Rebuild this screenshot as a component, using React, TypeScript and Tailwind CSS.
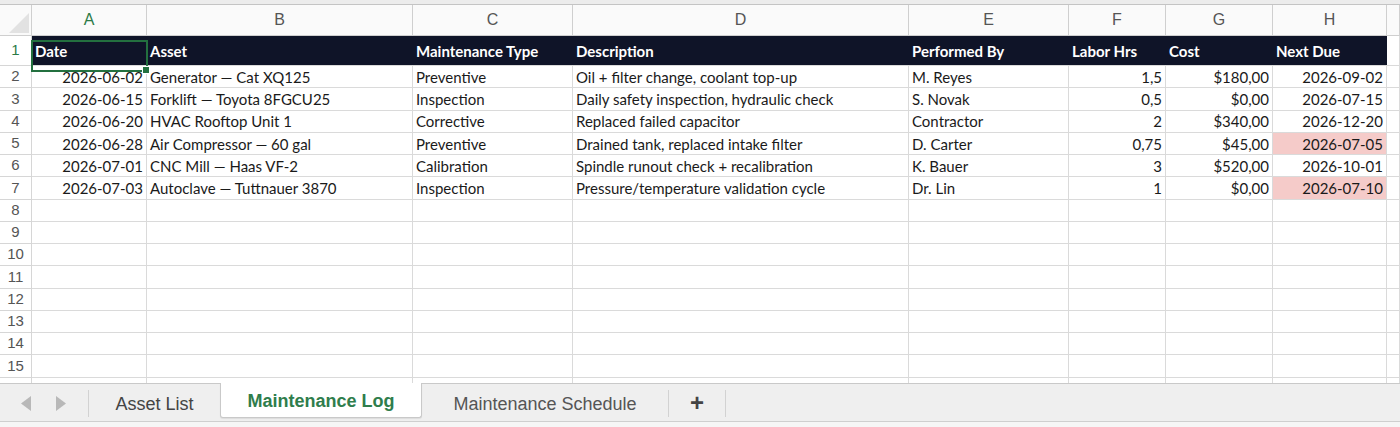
import React from 'react'

const cols = [
  { key: 'A', w: 'w-[115px]' },
  { key: 'B', w: 'w-[266px]' },
  { key: 'C', w: 'w-[160px]' },
  { key: 'D', w: 'w-[336px]' },
  { key: 'E', w: 'w-[160px]' },
  { key: 'F', w: 'w-[97px]' },
  { key: 'G', w: 'w-[107px]' },
  { key: 'H', w: 'w-[114px]' },
  { key: '', w: 'flex-1' },
]

const headers = ['Date', 'Asset', 'Maintenance Type', 'Description', 'Performed By', 'Labor Hrs', 'Cost', 'Next Due', '']

// right-aligned columns: A, F, G, H
const rightCols = [0, 5, 6, 7]

const rows: { cells: string[]; due?: boolean }[] = [
  { cells: ['2026-06-02', 'Generator — Cat XQ125', 'Preventive', 'Oil + filter change, coolant top-up', 'M. Reyes', '1,5', '$180,00', '2026-09-02'] },
  { cells: ['2026-06-15', 'Forklift — Toyota 8FGCU25', 'Inspection', 'Daily safety inspection, hydraulic check', 'S. Novak', '0,5', '$0,00', '2026-07-15'] },
  { cells: ['2026-06-20', 'HVAC Rooftop Unit 1', 'Corrective', 'Replaced failed capacitor', 'Contractor', '2', '$340,00', '2026-12-20'] },
  { cells: ['2026-06-28', 'Air Compressor — 60 gal', 'Preventive', 'Drained tank, replaced intake filter', 'D. Carter', '0,75', '$45,00', '2026-07-05'], due: true },
  { cells: ['2026-07-01', 'CNC Mill — Haas VF-2', 'Calibration', 'Spindle runout check + recalibration', 'K. Bauer', '3', '$520,00', '2026-10-01'] },
  { cells: ['2026-07-03', 'Autoclave — Tuttnauer 3870', 'Inspection', 'Pressure/temperature validation cycle', 'Dr. Lin', '1', '$0,00', '2026-07-10'], due: true },
]

const emptyRows = Array.from({ length: 9 }).map((_, i) => i + 8)

function RowLabel({ n, active }: { n: number; active?: boolean }) {
  return (
    <div
      className={`w-[32px] shrink-0 border-r border-b border-[#d6d6d6] bg-white flex items-center justify-center text-[15px] font-['Liberation_Sans'] ${
        active ? 'text-[#2c7a47]' : 'text-[#555]'
      }`}
    >
      {n}
    </div>
  )
}

function DataRow({ n, cells, due }: { n: number; cells: string[]; due?: boolean }) {
  return (
    <div className="flex h-[22.25px] shrink-0">
      <RowLabel n={n} />
      {cols.map((c, i) => (
        <div
          key={c.key + i}
          className={`${c.w} shrink-0 border-r border-b border-[#dadada] px-[3px] pt-px flex items-center whitespace-nowrap overflow-hidden text-[15px] text-[#1a1a1a] ${
            rightCols.includes(i) ? 'justify-end' : ''
          } ${due && i === 7 ? 'bg-[#f5cbc9]' : 'bg-white'}`}
        >
          {cells[i] ?? ''}
        </div>
      ))}
    </div>
  )
}

function Arrow({ dir }: { dir: 'left' | 'right' }) {
  return (
    <svg width="11" height="15" viewBox="0 0 11 15">
      {dir === 'left' ? (
        <polygon points="10,0 10,15 0,7.5" fill="#b8b8b8" />
      ) : (
        <polygon points="1,0 1,15 11,7.5" fill="#b8b8b8" />
      )}
    </svg>
  )
}

export default function App() {
  return (
    <div className="w-[1400px] h-[427px] flex flex-col bg-[#f2f2f2] overflow-hidden font-['Lato',sans-serif]">
      {/* top strip */}
      <div className="h-[5px] shrink-0 bg-[#ececec] border-b border-[#c4c4c4]" />

      {/* sheet grid */}
      <div className="relative h-[378px] shrink-0 bg-white overflow-hidden flex flex-col">
        {/* column letters */}
        <div className="flex h-[31px] shrink-0">
          <div className="w-[32px] shrink-0 border-r border-b border-[#cfcfcf] bg-[#fafafa] flex items-end justify-end p-[2px]">
            <svg width="22" height="22" viewBox="0 0 22 22">
              <polygon points="22,2 22,22 2,22" fill="#e2e2e2" />
            </svg>
          </div>
          {cols.map((c, i) => (
            <div
              key={'h' + i}
              className={`${c.w} shrink-0 border-r border-b border-[#cfcfcf] bg-[#fafafa] flex items-center justify-center text-[16px] font-['Liberation_Sans'] ${
                i === 0 ? 'text-[#2c7a47]' : 'text-[#555]'
              }`}
            >
              {c.key}
            </div>
          ))}
        </div>

        {/* header row */}
        <div className="flex h-[30px] shrink-0">
          <RowLabel n={1} active />
          {cols.map((c, i) => (
            <div
              key={'t' + i}
              className={`${c.w} shrink-0 border-b border-[#dadada] flex items-center px-[3px] pt-[2px] whitespace-nowrap text-[15px] font-bold text-white ${
                i < 8 ? 'bg-[#0f1428]' : 'bg-white border-r'
              }`}
            >
              {headers[i]}
            </div>
          ))}
        </div>

        {rows.map((r, i) => (
          <DataRow key={i} n={i + 2} cells={r.cells} due={r.due} />
        ))}
        {emptyRows.map((n) => (
          <DataRow key={n} n={n} cells={[]} />
        ))}

        {/* selection on A1 */}
        <div className="absolute left-[31px] top-[35px] w-[117px] h-[32px] border-2 border-[#23703f]" />
        <div className="absolute left-[142px] top-[61px] w-[8px] h-[8px] bg-[#23703f] border border-white" />
      </div>

      {/* sheet tabs */}
      <div className="h-[38px] shrink-0 border-t border-[#c9c9c9] bg-[#efefef] flex font-['Liberation_Sans'] text-[18px]">
        <div className="w-[88px] shrink-0 flex items-center gap-[23px] pl-[21px] pt-[2px]">
          <Arrow dir="left" />
          <Arrow dir="right" />
        </div>
        <div className="w-px bg-[#d2d2d2] mt-[6px] mb-[4px]" />
        <div className="w-[131px] flex items-center justify-center text-[#444] pt-[3px]">Asset List</div>
        <div className="-mt-px w-[202px] h-[35px] bg-white border border-t-0 border-[#c9c9c9] rounded-b-[3px] flex items-center justify-center pt-[3px] font-bold text-[#2f7d4c] shadow-[0_1px_1px_rgba(0,0,0,0.08)]">
          Maintenance Log
        </div>
        <div className="w-[246px] flex items-center justify-center text-[#555] pt-[3px]">Maintenance Schedule</div>
        <div className="w-px bg-[#d2d2d2] mt-[6px] mb-[4px]" />
        <div className="w-[56px] flex items-center justify-center text-[#444] text-[24px] font-bold">+</div>
        <div className="w-px bg-[#d2d2d2] mt-[6px] mb-[4px]" />
      </div>

      {/* bottom strip */}
      <div className="flex-1 border-t border-[#cfcfcf] bg-[#f6f6f6]" />
    </div>
  )
}
